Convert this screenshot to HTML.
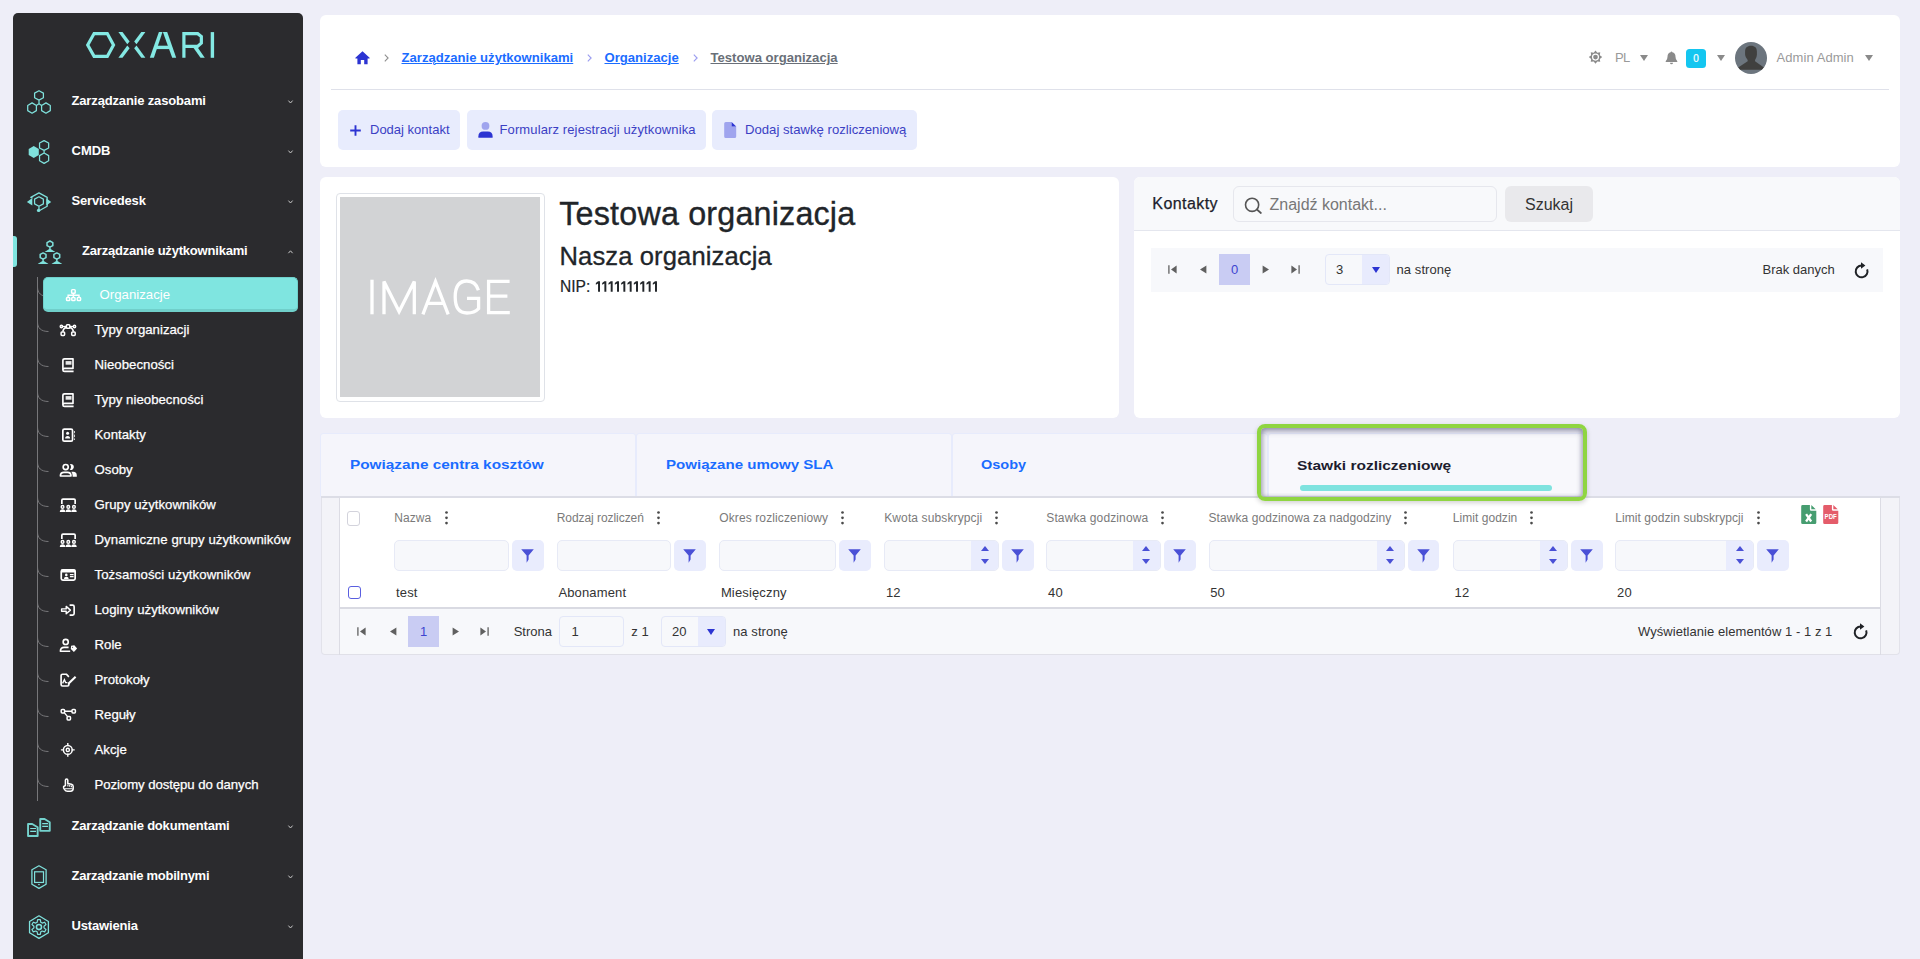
<!DOCTYPE html>
<html lang="pl">
<head>
<meta charset="utf-8">
<title>Testowa organizacja</title>
<style>
*{box-sizing:border-box;margin:0;padding:0}
html,body{width:1920px;height:959px;overflow:hidden}
body{background:#eeeef8;font-family:"Liberation Sans",sans-serif;color:#333;position:relative;-webkit-font-smoothing:antialiased}
.abs{position:absolute}
svg{display:block;overflow:visible}
.t{position:absolute;white-space:nowrap;line-height:1}

/* ---------- sidebar ---------- */
#side{position:absolute;left:13px;top:13px;width:290px;height:960px;background:#2b2b2e;border-radius:5px 5px 0 0}
.m1{position:absolute;left:71.5px;font-weight:bold;font-size:13px;color:#fff;white-space:nowrap;line-height:1;letter-spacing:-0.15px}
.m2{position:absolute;left:94.5px;font-size:13.2px;color:#fff;white-space:nowrap;line-height:1;letter-spacing:0.02px;-webkit-text-stroke:0.25px #fff}
.chev{position:absolute;left:287.5px;width:5px;height:4px}
.ico1{position:absolute}
.ico2{position:absolute}
.br{position:absolute;left:37px;width:12px;height:10px}


/* ---------- header ---------- */
.bc{position:absolute;top:51px;font-weight:bold;font-size:13.1px;line-height:13px;white-space:nowrap;text-decoration:underline;text-underline-offset:1px;text-decoration-thickness:1px}
.bcsep{position:absolute;top:53.5px;width:5px;height:8px}
.btn{position:absolute;top:110px;height:40px;background:#e8ecfd;border-radius:5px}
.btn span{position:absolute;top:13px;font-size:13px;line-height:13px;color:#3b3fc4;white-space:nowrap}
.hdr-t{position:absolute;top:51px;font-size:13px;line-height:13px;color:#9a9a9a;white-space:nowrap}
.tri{position:absolute;width:0;height:0;border-left:4.2px solid transparent;border-right:4.2px solid transparent;border-top:6.6px solid #8a8a8a}


/* ---------- org + contacts ---------- */
.pg-ico{position:absolute}
.sel{position:absolute;height:31px;border:1px solid #e3e7f8;border-radius:4px;background:#f7f8fb;overflow:hidden}
.sel i{position:absolute;right:0;top:0;bottom:0;width:27px;background:#e8ebfd}
.sel i:after{content:"";position:absolute;left:9.7px;top:11.5px;border-left:4.5px solid transparent;border-right:4.5px solid transparent;border-top:6.5px solid #2c34d2}
.sel b{position:absolute;left:10px;top:8px;font-weight:normal;font-size:13px;line-height:13px;color:#333}
.pgt{position:absolute;font-size:13px;line-height:13px;color:#333;white-space:nowrap}
.pgnum{position:absolute;width:31px;height:31px;background:#c9ccf3;color:#3d44d0;font-size:13px;line-height:31px;text-align:center}


/* ---------- tabs + grid ---------- */
.tab{position:absolute;top:433px;width:316px;height:64px;background:#f5f5fb;border:1px solid #e7ebfc;border-radius:3px 3px 0 0}
.tabt{position:absolute;top:457.5px;font-weight:bold;font-size:13px;line-height:13px;white-space:nowrap;transform-origin:0 50%;color:#1a6cff}
.gh{position:absolute;top:512px;font-size:12px;line-height:12px;color:#7a7a7a;white-space:nowrap;letter-spacing:0.08px}
.keb{position:absolute;top:510.8px;width:3px;height:14px}
.fin{position:absolute;top:540px;height:31px;border:1px solid #e7eaf6;border-radius:5px;background:#f7f8fb;overflow:hidden}
.fin i{position:absolute;right:0;top:0;bottom:0;width:27px;background:#e9ecfd}
.fin i:before{content:"";position:absolute;left:9.7px;top:5px;border-left:4.4px solid transparent;border-right:4.4px solid transparent;border-bottom:5.4px solid #4a50d6}
.fin i:after{content:"";position:absolute;left:9.7px;top:18.2px;border-left:4.4px solid transparent;border-right:4.4px solid transparent;border-top:5.4px solid #4a50d6}
.fbt{position:absolute;top:540px;width:31.5px;height:31px;border-radius:5px;background:#e9ecfd}
.fbt svg{position:absolute;left:9.2px;top:8.6px}
.gd{position:absolute;top:586px;font-size:13px;line-height:13px;color:#333;white-space:nowrap;letter-spacing:0.15px}

/* ---------- cards ---------- */
.card{position:absolute;background:#fff;border-radius:6px}
</style>
</head>
<body>

<!-- ================= SIDEBAR ================= -->
<div id="side"></div>


<!-- logo -->
<svg class="abs" style="left:80px;top:25px" width="150" height="40" viewBox="80 25 150 40">
  <g fill="none" stroke="#84e9e4" stroke-width="3.2" stroke-linejoin="miter">
    <path d="M87.7 45 L94.1 33.55 L107.3 33.55 L113.5 45 L107.3 56.4 L94.1 56.4 Z"/>
    <path d="M183.9 57.8 L183.9 33.65 L197.7 33.65 L201.35 36.5 L201.35 43.1 L197.5 46.4 L184 46.4"/>
  </g>
  <g fill="#84e9e4">
    <polygon points="118.4,32.1 122.5,32.1 129.6,41.6 127.3,44.3"/>
    <polygon points="118.4,57.8 122.5,57.8 129.6,48.3 127.3,45.6"/>
    <polygon points="145.4,32.1 141.3,32.1 134.2,41.6 136.5,44.3"/>
    <polygon points="145.4,57.8 141.3,57.8 134.2,48.3 136.5,45.6"/>
    <polygon points="149.8,57.8 153.9,57.8 162.5,32.1 158.9,32.1"/>
    <polygon points="162.9,32.1 167.2,32.1 176.2,57.8 172.2,57.8"/>
    <rect x="155.5" y="45.7" width="15.6" height="3.4"/>
    <polygon points="193.4,47.8 197.9,47.8 204.8,57.8 200.5,57.8"/>
    <rect x="210.7" y="32.1" width="3.4" height="25.7"/>
  </g>
</svg>

<!-- level-1 items -->
<div class="m1" style="top:94px">Zarządzanie zasobami</div>
<div class="m1" style="top:144px;letter-spacing:0">CMDB</div>
<div class="m1" style="top:194px">Servicedesk</div>
<div class="abs" style="left:13px;top:236px;width:4px;height:31px;background:#7fe5e0;border-radius:0 3px 3px 0"></div>
<div class="m1" style="top:244px;left:82px;letter-spacing:-0.2px">Zarządzanie użytkownikami</div>
<div class="m1" style="top:819px;letter-spacing:-0.2px">Zarządzanie dokumentami</div>
<div class="m1" style="top:869px;letter-spacing:-0.25px">Zarządzanie mobilnymi</div>
<div class="m1" style="top:919px">Ustawienia</div>

<!-- chevrons -->
<svg class="chev" style="top:99.5px" viewBox="0 0 5 4"><path d="M0.4 0.6 L2.5 3 L4.6 0.6" fill="none" stroke="#c8c8c8" stroke-width="1"/></svg>
<svg class="chev" style="top:149.5px" viewBox="0 0 5 4"><path d="M0.4 0.6 L2.5 3 L4.6 0.6" fill="none" stroke="#c8c8c8" stroke-width="1"/></svg>
<svg class="chev" style="top:199.5px" viewBox="0 0 5 4"><path d="M0.4 0.6 L2.5 3 L4.6 0.6" fill="none" stroke="#c8c8c8" stroke-width="1"/></svg>
<svg class="chev" style="top:250px" viewBox="0 0 5 4"><path d="M0.4 3.2 L2.5 0.8 L4.6 3.2" fill="none" stroke="#c8c8c8" stroke-width="1"/></svg>
<svg class="chev" style="top:824.5px" viewBox="0 0 5 4"><path d="M0.4 0.6 L2.5 3 L4.6 0.6" fill="none" stroke="#c8c8c8" stroke-width="1"/></svg>
<svg class="chev" style="top:874.5px" viewBox="0 0 5 4"><path d="M0.4 0.6 L2.5 3 L4.6 0.6" fill="none" stroke="#c8c8c8" stroke-width="1"/></svg>
<svg class="chev" style="top:924.5px" viewBox="0 0 5 4"><path d="M0.4 0.6 L2.5 3 L4.6 0.6" fill="none" stroke="#c8c8c8" stroke-width="1"/></svg>

<!-- tree line + branches -->
<div class="abs" style="left:37px;top:277px;width:1px;height:524px;background:#77777a"></div>
<svg class="br" style="top:287px" viewBox="0 0 12 10"><path d="M0.5 0 C0.5 6 4 9.5 11.5 9.5" fill="none" stroke="#77777a" stroke-width="1"/></svg>
<svg class="br" style="top:322px" viewBox="0 0 12 10"><path d="M0.5 0 C0.5 6 4 9.5 11.5 9.5" fill="none" stroke="#77777a" stroke-width="1"/></svg>
<svg class="br" style="top:357px" viewBox="0 0 12 10"><path d="M0.5 0 C0.5 6 4 9.5 11.5 9.5" fill="none" stroke="#77777a" stroke-width="1"/></svg>
<svg class="br" style="top:392px" viewBox="0 0 12 10"><path d="M0.5 0 C0.5 6 4 9.5 11.5 9.5" fill="none" stroke="#77777a" stroke-width="1"/></svg>
<svg class="br" style="top:427px" viewBox="0 0 12 10"><path d="M0.5 0 C0.5 6 4 9.5 11.5 9.5" fill="none" stroke="#77777a" stroke-width="1"/></svg>
<svg class="br" style="top:462px" viewBox="0 0 12 10"><path d="M0.5 0 C0.5 6 4 9.5 11.5 9.5" fill="none" stroke="#77777a" stroke-width="1"/></svg>
<svg class="br" style="top:497px" viewBox="0 0 12 10"><path d="M0.5 0 C0.5 6 4 9.5 11.5 9.5" fill="none" stroke="#77777a" stroke-width="1"/></svg>
<svg class="br" style="top:532px" viewBox="0 0 12 10"><path d="M0.5 0 C0.5 6 4 9.5 11.5 9.5" fill="none" stroke="#77777a" stroke-width="1"/></svg>
<svg class="br" style="top:567px" viewBox="0 0 12 10"><path d="M0.5 0 C0.5 6 4 9.5 11.5 9.5" fill="none" stroke="#77777a" stroke-width="1"/></svg>
<svg class="br" style="top:602px" viewBox="0 0 12 10"><path d="M0.5 0 C0.5 6 4 9.5 11.5 9.5" fill="none" stroke="#77777a" stroke-width="1"/></svg>
<svg class="br" style="top:637px" viewBox="0 0 12 10"><path d="M0.5 0 C0.5 6 4 9.5 11.5 9.5" fill="none" stroke="#77777a" stroke-width="1"/></svg>
<svg class="br" style="top:672px" viewBox="0 0 12 10"><path d="M0.5 0 C0.5 6 4 9.5 11.5 9.5" fill="none" stroke="#77777a" stroke-width="1"/></svg>
<svg class="br" style="top:707px" viewBox="0 0 12 10"><path d="M0.5 0 C0.5 6 4 9.5 11.5 9.5" fill="none" stroke="#77777a" stroke-width="1"/></svg>
<svg class="br" style="top:742px" viewBox="0 0 12 10"><path d="M0.5 0 C0.5 6 4 9.5 11.5 9.5" fill="none" stroke="#77777a" stroke-width="1"/></svg>
<svg class="br" style="top:777px" viewBox="0 0 12 10"><path d="M0.5 0 C0.5 6 4 9.5 11.5 9.5" fill="none" stroke="#77777a" stroke-width="1"/></svg>


<!-- active item -->
<div class="abs" style="left:43px;top:277px;width:255px;height:35px;background:#7fe5e0;border:1px solid #70d1cc;border-bottom:3px solid #70cfca;border-radius:5px"></div>
<div class="m2" style="top:288px;left:99.5px;-webkit-text-stroke:0">Organizacje</div>

<!-- level-2 items -->
<div class="m2" style="top:323px">Typy organizacji</div>
<div class="m2" style="top:358px">Nieobecności</div>
<div class="m2" style="top:393px">Typy nieobecności</div>
<div class="m2" style="top:428px">Kontakty</div>
<div class="m2" style="top:463px">Osoby</div>
<div class="m2" style="top:498px">Grupy użytkowników</div>
<div class="m2" style="top:533px;letter-spacing:0.06px">Dynamiczne grupy użytkowników</div>
<div class="m2" style="top:568px;letter-spacing:0.09px">Tożsamości użytkowników</div>
<div class="m2" style="top:603px">Loginy użytkowników</div>
<div class="m2" style="top:638px">Role</div>
<div class="m2" style="top:673px">Protokoły</div>
<div class="m2" style="top:708px">Reguły</div>
<div class="m2" style="top:743px">Akcje</div>
<div class="m2" style="top:778px;letter-spacing:-0.07px">Poziomy dostępu do danych</div>
<svg class="abs" style="left:0;top:0" width="320" height="959" viewBox="0 0 320 959">
<path d="M39.00 90.75 L43.40 93.10 L43.40 97.80 L39.00 100.15 L34.60 97.80 L34.60 93.10 Z M32.05 102.90 L36.40 105.47 L36.40 110.62 L32.05 113.20 L27.70 110.62 L27.70 105.47 Z M45.95 102.90 L50.30 105.47 L50.30 110.62 L45.95 113.20 L41.60 110.62 L41.60 105.47 Z M39 100.15 L39 103.7 L36.4 105.45 M39 103.7 L41.6 105.45" fill="none" stroke="#7fe1dc" stroke-width="1.25" stroke-linejoin="round"/>
<path d="M33.75 146.05 L38.80 149.03 L38.80 154.97 L33.75 157.95 L28.70 154.97 L28.70 149.03 Z" fill="#7fe1dc"/>
<path d="M44.10 140.60 L48.65 143.05 L48.65 147.95 L44.10 150.40 L39.55 147.95 L39.55 143.05 Z M44.10 153.00 L48.65 155.60 L48.65 160.80 L44.10 163.40 L39.55 160.80 L39.55 155.60 Z M44.1 150.4 L44.1 153" fill="none" stroke="#7fe1dc" stroke-width="1.25" stroke-linejoin="round"/>
<path d="M32.6 198 L30.8 197.4 L38.97 192.9 L47.2 197.4 L47.2 206.2 L39.6 210.5" fill="none" stroke="#7fe1dc" stroke-width="1.25" stroke-linejoin="round"/>
<path d="M38.97 196.80 L43.37 199.15 L43.37 203.85 L38.97 206.20 L34.57 203.85 L34.57 199.15 Z M38.97 206.2 L38.97 209.5" fill="none" stroke="#7fe1dc" stroke-width="1.25" stroke-linejoin="round"/>
<path d="M26.9 201.9 L32.3 197.9 L32.3 205.5 Z M51.2 201.9 L46.3 198.2 L46.3 205.4 Z" fill="#7fe1dc"/>
<circle cx="38.6" cy="210.4" r="1.7" fill="#7fe1dc"/>
<path d="M49.93 241.00 L52.83 242.55 L52.83 245.65 L49.93 247.20 L47.03 245.65 L47.03 242.55 Z" fill="none" stroke="#7fe1dc" stroke-width="1.5" stroke-linejoin="round"/><path d="M49.93 247.2 L49.93 249.1" stroke="#7fe1dc" stroke-width="1.4"/><path d="M44.7 252.1 Q45.0 251.2 46.1 250.9 L49.63 248.79999999999998 L50.23 248.79999999999998 L53.800000000000004 250.9 Q54.900000000000006 251.2 55.2 252.1 Z" fill="#7fe1dc"/>
<path d="M43.10 252.90 L46.00 254.45 L46.00 257.55 L43.10 259.10 L40.20 257.55 L40.20 254.45 Z" fill="none" stroke="#7fe1dc" stroke-width="1.5" stroke-linejoin="round"/><path d="M43.1 259.1 L43.1 261.0" stroke="#7fe1dc" stroke-width="1.4"/><path d="M37.8 264.1 Q38.099999999999994 263.20000000000005 39.199999999999996 262.90000000000003 L42.800000000000004 260.8 L43.4 260.8 L47.0 262.90000000000003 Q48.1 263.20000000000005 48.4 264.1 Z" fill="#7fe1dc"/>
<path d="M56.80 252.90 L59.70 254.45 L59.70 257.55 L56.80 259.10 L53.90 257.55 L53.90 254.45 Z" fill="none" stroke="#7fe1dc" stroke-width="1.5" stroke-linejoin="round"/><path d="M56.8 259.1 L56.8 261.0" stroke="#7fe1dc" stroke-width="1.4"/><path d="M51.6 264.1 Q51.9 263.20000000000005 53.0 262.90000000000003 L56.5 260.8 L57.099999999999994 260.8 L60.7 262.90000000000003 Q61.800000000000004 263.20000000000005 62.1 264.1 Z" fill="#7fe1dc"/>
<path d="M28.05 824.05 L32.2 824.05 L37.65 827.3 L37.65 836 L28.05 836 Z M40.25 819.05 L44.6 819.05 L49.75 822.2 L49.75 830.85 L40.25 830.85 Z" fill="none" stroke="#74d2cd" stroke-width="1.9" stroke-linejoin="round"/>
<path d="M30.2 828.5 L36 828.5 M30.2 831.3 L36 831.3 M42.2 823.65 L48 823.65 M42.2 826.4 L48 826.4" stroke="#7fe1dc" stroke-width="1.15"/>
<path d="M38.97 865.8 L46.1 869.75 L46.1 884.3 L38.97 888.4 L31.9 884.3 L31.9 869.75 Z" fill="none" stroke="#7fe1dc" stroke-width="1.3" stroke-linejoin="round"/>
<rect x="34.6" y="871.8" width="8.9" height="10.65" fill="none" stroke="#7fe1dc" stroke-width="1.2"/>
<ellipse cx="38.97" cy="884.6" rx="1.05" ry="0.6" fill="#7fe1dc"/>
<path d="M38.97 915.8 L48.4 921.5 L48.4 932.7 L38.97 938.4 L29.55 932.7 L29.55 921.5 Z" fill="none" stroke="#7fe1dc" stroke-width="1.3" stroke-linejoin="round"/>
<path d="M37.14 922.29 L37.61 919.72 L40.33 919.72 L40.80 922.29 L42.18 923.09 L44.64 922.21 L45.99 924.56 L44.01 926.25 L44.01 927.85 L45.99 929.54 L44.64 931.89 L42.18 931.01 L40.80 931.81 L40.33 934.38 L37.61 934.38 L37.14 931.81 L35.76 931.01 L33.30 931.89 L31.95 929.54 L33.93 927.85 L33.93 926.25 L31.95 924.56 L33.30 922.21 L35.76 923.09 Z" fill="none" stroke="#7fe1dc" stroke-width="1.2" stroke-linejoin="round"/>
<circle cx="38.97" cy="927.05" r="2.55" fill="none" stroke="#7fe1dc" stroke-width="1.55"/>
</svg>
<svg class="abs" style="left:0;top:0" width="320" height="959" viewBox="0 0 320 959">
<path d="M73.4 293.4 L73.4 297 M68.1 297.2 L68.1 295.2 L79 295.2 L79 297.2" fill="none" stroke="#fff" stroke-width="1.35"/>
<rect x="71.6" y="289.6" width="3.6" height="3.6" rx="0.8" fill="none" stroke="#fff" stroke-width="1.45"/>
<rect x="66.5" y="297.4" width="3.3" height="3.1" rx="0.8" fill="none" stroke="#fff" stroke-width="1.45"/>
<rect x="71.75" y="297.4" width="3.3" height="3.1" rx="0.8" fill="none" stroke="#fff" stroke-width="1.45"/>
<rect x="77.3" y="297.4" width="3.3" height="3.1" rx="0.8" fill="none" stroke="#fff" stroke-width="1.45"/>
<path d="M61.5 326.5 L74.4 326.5" stroke="#fff" stroke-width="1.30"/>
<circle cx="61.4" cy="326.5" r="1.25" fill="none" stroke="#fff" stroke-width="1.30"/><circle cx="74.5" cy="326.5" r="1.25" fill="none" stroke="#fff" stroke-width="1.30"/>
<rect x="66.4" y="324.8" width="3.4" height="3.4" rx="0.8" fill="#2b2b2e" stroke="#fff" stroke-width="1.50"/>
<path d="M66.4 327.2 Q63 328.5 62.8 331.6 M69.8 327.2 Q73.2 328.5 73.4 331.6" fill="none" stroke="#fff" stroke-width="1.45"/>
<rect x="61.1" y="331.9" width="3.5" height="3.5" rx="0.8" fill="none" stroke="#fff" stroke-width="1.50"/><rect x="71.7" y="331.9" width="3.5" height="3.5" rx="0.8" fill="none" stroke="#fff" stroke-width="1.50"/>
<path d="M62.9 370.0 L62.9 360.5 Q62.9 358.85 64.6 358.85 L73 358.85 L73 368.40000000000003 L64.6 368.40000000000003 Q62.9 368.40000000000003 62.9 370.0 Q62.9 371.40000000000003 64.6 371.40000000000003 L73.6 371.40000000000003" fill="none" stroke="#fff" stroke-width="1.65" stroke-linejoin="round"/>
<rect x="65.6" y="361.1" width="5.9" height="3.6" fill="#e8e8e8"/>
<path d="M62.9 405.0 L62.9 395.5 Q62.9 393.85 64.6 393.85 L73 393.85 L73 403.40000000000003 L64.6 403.40000000000003 Q62.9 403.40000000000003 62.9 405.0 Q62.9 406.40000000000003 64.6 406.40000000000003 L73.6 406.40000000000003" fill="none" stroke="#fff" stroke-width="1.65" stroke-linejoin="round"/>
<rect x="65.6" y="396.1" width="5.9" height="3.6" fill="#e8e8e8"/>
<rect x="62.85" y="429.05" width="9.7" height="12.1" rx="1.5" fill="none" stroke="#fff" stroke-width="1.70"/>
<circle cx="67.6" cy="433.3" r="1.5" fill="#fff"/><path d="M65.1 438.6 Q65.1 436 67.6 436 Q70.1 436 70.1 438.6 Z" fill="#fff"/>
<path d="M74.5 431 L74.5 433.2 M74.5 434.6 L74.5 437.2 M74.5 438.4 L74.5 440" stroke="#cfcfcf" stroke-width="1"/>
<circle cx="65.7" cy="467" r="2.55" fill="none" stroke="#fff" stroke-width="1.65"/>
<path d="M60.4 476 Q60.4 472.4 64 472.4 L67.4 472.4 Q71 472.4 71 476 Z" fill="none" stroke="#fff" stroke-width="1.65" stroke-linejoin="round"/>
<path d="M69.9 464.3 A2.9 2.9 0 1 1 69.9 469.7 A4.2 4.2 0 0 0 69.9 464.3 Z" fill="#fff"/>
<path d="M71.3 471.8 L73.2 471.8 Q76.8 471.8 76.8 475.4 L76.8 476.7 L72.6 476.7 L72.6 475.6 Q72.6 473.3 71.3 471.8 Z" fill="#fff"/>
<path d="M61.85 503.90000000000003 L61.85 500.2 Q61.85 499.05 63 499.05 L74 499.05 Q75.15 499.05 75.15 500.2 L75.15 503.90000000000003" fill="none" stroke="#fff" stroke-width="1.70"/>
<circle cx="62.55" cy="506.90000000000003" r="1.35" fill="none" stroke="#fff" stroke-width="1.40"/>
<path d="M59.8 511.90000000000003 Q59.8 509.2 62.55 509.2 Q65.3 509.2 65.3 511.90000000000003 Z" fill="#fff"/>
<circle cx="68.3" cy="506.90000000000003" r="1.35" fill="none" stroke="#fff" stroke-width="1.40"/>
<path d="M65.55 511.90000000000003 Q65.55 509.2 68.3 509.2 Q71.05 509.2 71.05 511.90000000000003 Z" fill="#fff"/>
<circle cx="73.95" cy="506.90000000000003" r="1.35" fill="none" stroke="#fff" stroke-width="1.40"/>
<path d="M71.2 511.90000000000003 Q71.2 509.2 73.95 509.2 Q76.7 509.2 76.7 511.90000000000003 Z" fill="#fff"/>
<path d="M61.85 538.9 L61.85 535.1999999999999 Q61.85 534.05 63 534.05 L74 534.05 Q75.15 534.05 75.15 535.1999999999999 L75.15 538.9" fill="none" stroke="#fff" stroke-width="1.70"/>
<circle cx="62.55" cy="541.9" r="1.35" fill="none" stroke="#fff" stroke-width="1.40"/>
<path d="M59.8 546.9 Q59.8 544.1999999999999 62.55 544.1999999999999 Q65.3 544.1999999999999 65.3 546.9 Z" fill="#fff"/>
<circle cx="68.3" cy="541.9" r="1.35" fill="none" stroke="#fff" stroke-width="1.40"/>
<path d="M65.55 546.9 Q65.55 544.1999999999999 68.3 544.1999999999999 Q71.05 544.1999999999999 71.05 546.9 Z" fill="#fff"/>
<circle cx="73.95" cy="541.9" r="1.35" fill="none" stroke="#fff" stroke-width="1.40"/>
<path d="M71.2 546.9 Q71.2 544.1999999999999 73.95 544.1999999999999 Q76.7 544.1999999999999 76.7 546.9 Z" fill="#fff"/>
<rect x="61.25" y="569.95" width="13.9" height="10.2" rx="1.6" fill="none" stroke="#fff" stroke-width="1.70"/>
<rect x="61" y="569.4" width="14.4" height="3" rx="1" fill="#fff"/>
<circle cx="66.3" cy="574.9" r="1.3" fill="#fff"/><path d="M63.9 578.9 Q63.9 576.7 66.3 576.7 Q68.7 576.7 68.7 578.9 Z" fill="#fff"/>
<path d="M69.9 574.7 L73.6 574.7 M69.9 576.7 L73.6 576.7" stroke="#fff" stroke-width="1.30"/>
<path d="M69.6 605.15 L72.6 605.15 Q74.15 605.15 74.15 606.7 L74.15 613.5 Q74.15 615.05 72.6 615.05 L69.6 615.05" fill="none" stroke="#fff" stroke-width="1.65"/>
<path d="M61.6 608.9 L66.2 608.9 L66.2 606.4 L70.4 610.1 L66.2 613.8 L66.2 611.3 L61.6 611.3 Z" fill="none" stroke="#fff" stroke-width="1.40" stroke-linejoin="round"/>
<circle cx="65.7" cy="641.9" r="2.55" fill="none" stroke="#fff" stroke-width="1.65"/>
<path d="M70.2 651.2 L60.4 651.2 Q60.4 647.3 64.2 647.3 L68.6 647.3" fill="none" stroke="#fff" stroke-width="1.65" stroke-linejoin="round"/>
<path d="M71.1 645.7 L74.3 645.3 L77.1 648.5 L73.9 652 L70.8 649 Z" fill="#fff"/><circle cx="72.6" cy="647.2" r="0.55" fill="#2b2b2e"/>
<path d="M68.9 683 L68.9 684.6 Q68.9 686 67.5 686 L62.5 686 Q61.1 686 61.1 684.6 L61.1 675.6 Q61.1 674.2 62.5 674.2 L66.3 674.2 L68.9 676.8" fill="none" stroke="#fff" stroke-width="1.65" stroke-linejoin="round"/>
<path d="M74.9 676 L76.3 677.4 L69.6 684 L67.6 684.5 L68.1 682.6 Z" fill="#fff"/>
<path d="M62.6 683.4 L64.4 679.6 L65.6 682.6 L67.4 682.6" fill="none" stroke="#fff" stroke-width="1.30"/>
<path d="M64.6 711.2 L72 711.2 M64.2 712.6 L67.6 716.6" stroke="#fff" stroke-width="1.40"/>
<rect x="61.2" y="709.5" width="3.4" height="3.4" rx="0.9" fill="none" stroke="#fff" stroke-width="1.50"/>
<rect x="72" y="709.5" width="3.4" height="3.4" rx="0.9" fill="none" stroke="#fff" stroke-width="1.50"/>
<rect x="67.1" y="716.5" width="3.4" height="3.4" rx="0.9" fill="none" stroke="#fff" stroke-width="1.50"/>
<circle cx="67.8" cy="749.9" r="4.4" fill="none" stroke="#fff" stroke-width="1.50"/><circle cx="67.8" cy="749.9" r="1.6" fill="none" stroke="#fff" stroke-width="1.40"/>
<path d="M67.8 743 L67.8 746 M67.8 753.8 L67.8 756.8 M60.9 749.9 L63.9 749.9 M71.7 749.9 L74.7 749.9" stroke="#fff" stroke-width="1.40"/>
<path d="M65.4 785.6 L65.4 780.2 Q65.4 778.9 66.6 778.9 Q67.8 778.9 67.8 780.2 L67.8 783.4 L71.4 784.2 Q73.2 784.7 73.2 786.5 L73.2 788.6 Q73.2 791.2 70.4 791.2 L67.4 791.2 Q65.6 791.2 64.6 789.6 L63.6 787.8 Q63.2 786.6 64.4 786 Z" fill="none" stroke="#fff" stroke-width="1.50" stroke-linejoin="round"/>
<path d="M67.9 786.4 L67.9 784.6 M69.7 786.8 L69.7 785 M71.4 787.2 L71.4 785.4 M65 788.8 L72.6 788.8" stroke="#fff" stroke-width="1.10"/>
</svg>



<!-- ================= HEADER CARD ================= -->
<div class="card" style="left:320px;top:15px;width:1580px;height:152px"></div>

<!-- breadcrumb -->
<svg class="abs" style="left:354.5px;top:50.5px" width="15" height="14" viewBox="0 0 15 14"><path d="M7.5 0.3 L14.6 6.8 L14.6 7.4 L12.6 7.4 L12.6 13.3 L9.2 13.3 L9.2 8.9 L5.8 8.9 L5.8 13.3 L2.4 13.3 L2.4 7.4 L0.4 7.4 L0.4 6.8 Z" fill="#2c34d2"/></svg>
<svg class="bcsep" style="left:383.5px" viewBox="0 0 5 8"><path d="M0.8 0.6 L4.1 4 L0.8 7.4" fill="none" stroke="#8f8f8f" stroke-width="1.1"/></svg>
<div class="bc" style="left:401.5px;color:#1b6cff">Zarządzanie użytkownikami</div>
<svg class="bcsep" style="left:587px" viewBox="0 0 5 8"><path d="M0.8 0.6 L4.1 4 L0.8 7.4" fill="none" stroke="#9b9df0" stroke-width="1.15"/></svg>
<div class="bc" style="left:604.5px;color:#1b6cff">Organizacje</div>
<svg class="bcsep" style="left:692.5px" viewBox="0 0 5 8"><path d="M0.8 0.6 L4.1 4 L0.8 7.4" fill="none" stroke="#9b9df0" stroke-width="1.15"/></svg>
<div class="bc" style="left:710.5px;color:#696f78">Testowa organizacja</div>

<!-- right side -->
<svg class="abs" style="left:1588px;top:50px" width="15" height="15" viewBox="0 0 15 15">
 <polygon points="7.50,0.40 9.30,2.76 12.24,2.36 11.84,5.30 14.20,7.10 11.84,8.90 12.24,11.84 9.30,11.44 7.50,13.80 5.70,11.44 2.76,11.84 3.16,8.90 0.80,7.10 3.16,5.30 2.76,2.36 5.70,2.76" fill="#8a8a8a"/>
 <circle cx="7.5" cy="7.1" r="3.55" fill="#fff"/><circle cx="7.5" cy="7.1" r="2.35" fill="#8a8a8a"/>
</svg>
<div class="hdr-t" style="left:1615px;letter-spacing:-0.6px">PL</div>
<div class="tri" style="left:1640px;top:54.7px"></div>
<svg class="abs" style="left:1664.6px;top:50.5px" width="13" height="14" viewBox="0 0 13 14"><path d="M6.5 0.4 Q7.3 0.4 7.3 1.3 Q10.5 2 10.5 5.8 Q10.5 8.8 12.3 10.2 L12.3 11 L0.7 11 L0.7 10.2 Q2.5 8.8 2.5 5.8 Q2.5 2 5.7 1.3 Q5.7 0.4 6.5 0.4 Z M5 11.8 L8 11.8 Q8 13.3 6.5 13.3 Q5 13.3 5 11.8 Z" fill="#8a8a8a"/></svg>
<div class="abs" style="left:1686px;top:49px;width:20px;height:19px;background:#14c6f0;border-radius:3.5px;color:#fff;font-size:10px;line-height:20px;text-align:center;-webkit-text-stroke:0.2px #fff">0</div>
<div class="tri" style="left:1717px;top:54.7px"></div>
<svg class="abs" style="left:1735px;top:42px" width="32" height="32" viewBox="0 0 32 32">
 <defs><clipPath id="av"><circle cx="16" cy="16" r="16"/></clipPath></defs>
 <circle cx="16" cy="16" r="16" fill="#6c757e"/>
 <g clip-path="url(#av)" fill="#40403f">
  <path d="M16 3.8 C19.9 3.8 21.9 6 21.9 9.4 L21.9 12.6 C21.9 14.8 20.9 16.6 20.05 17.9 L20.05 19.3 L28.9 25.6 L27.4 27.75 L4.6 27.75 L3.2 25.6 L12.65 19.3 L12.65 17.9 C11.8 16.6 10.1 14.8 10.1 12.6 L10.1 9.4 C10.1 6 12.1 3.8 16 3.8 Z"/>
 </g>
</svg>
<div class="hdr-t" style="left:1776.5px;letter-spacing:0.07px">Admin Admin</div>
<div class="tri" style="left:1864.7px;top:54.7px"></div>

<!-- divider -->
<div class="abs" style="left:331px;top:89px;width:1558px;height:1px;background:#dfe1ea"></div>

<!-- toolbar buttons -->
<div class="btn" style="left:338px;width:122px">
 <svg class="abs" style="left:12px;top:14.5px" width="11" height="11" viewBox="0 0 11 11"><path d="M5.5 0.2 V10.8 M0.2 5.5 H10.8" stroke="#2c34d2" stroke-width="1.9"/></svg>
 <span style="left:32px">Dodaj kontakt</span>
</div>
<div class="btn" style="left:467px;width:239px">
 <svg class="abs" style="left:10.5px;top:12px" width="15" height="16" viewBox="0 0 15 16"><circle cx="7.5" cy="3.9" r="3.9" fill="#9fa4ee"/><path d="M0.4 15.8 L0.4 14.2 Q0.4 9.4 5.2 9.4 L9.8 9.4 Q14.6 9.4 14.6 14.2 L14.6 15.8 Z" fill="#2c34d2"/></svg>
 <span style="left:32.5px;letter-spacing:0.12px">Formularz rejestracji użytkownika</span>
</div>
<div class="btn" style="left:712px;width:205px">
 <svg class="abs" style="left:12.3px;top:12px" width="13" height="16" viewBox="0 0 13 16"><path d="M1.8 0 L7.6 0 L7.6 4.6 L12.2 4.6 L12.2 14.4 Q12.2 16 10.6 16 L1.8 16 Q0.2 16 0.2 14.4 L0.2 1.6 Q0.2 0 1.8 0 Z" fill="#9fa4ee"/><path d="M7.6 0 L12.2 4.6 L7.6 4.6 Z" fill="#2c34d2"/></svg>
 <span style="left:33px;font-size:13.15px">Dodaj stawkę rozliczeniową</span>
</div>


<!-- ================= ORG CARD ================= -->
<div class="card" style="left:320px;top:177px;width:799px;height:241px"></div>

<div class="abs" style="left:336px;top:193px;width:209px;height:209px;border:1px solid #dfe2e8;border-radius:4px;background:#fff"></div>
<div class="abs" style="left:340px;top:197px;width:200px;height:200px;background:#d2d3d5"></div>
<!-- IMAGE thin text -->
<svg class="abs" style="left:360px;top:270px" width="160" height="56" viewBox="360 270 160 56" fill="none" stroke="#fff" stroke-width="3.3" stroke-linejoin="miter">
 <path d="M372 279.7 V314.3"/>
 <path d="M384 314.3 V281.5 L399.1 311.6 L414.3 281.5 V314.3"/>
 <path d="M422.9 314.3 L435.5 281.6 L448.2 314.3 M427.2 303.4 H443.8"/>
 <path d="M478.4 290.2 Q475.6 281 466.8 281 Q455.2 281 455.2 297 Q455.2 313 467 313 Q474.4 313 478.6 308.6 V298.4 H467"/>
 <path d="M509.6 281.4 H488.6 V312.7 H509.8 M488.6 296.2 H507.4"/>
</svg>
<div class="t" style="left:559.3px;top:198.4px;font-size:32.3px;line-height:32px;color:#212529;letter-spacing:0.18px;-webkit-text-stroke:0.35px #212529">Testowa organizacja</div>
<div class="t" style="left:559.5px;top:243.3px;font-size:25.6px;line-height:26px;color:#212529;letter-spacing:0.1px;-webkit-text-stroke:0.3px #212529">Nasza organizacja</div>
<div class="t" style="left:560px;top:279px;font-size:15.6px;line-height:15px;color:#212529;-webkit-text-stroke:0.2px #212529">NIP:</div>
<svg class="abs" style="left:590px;top:278px" width="80" height="16" viewBox="590 278 80 16"><path d="M598.05 281.35 h1.95 v10.35 h-1.95 v-8.1 l-2.2 1.15 v-1.75 z M604.38 281.35 h1.95 v10.35 h-1.95 v-8.1 l-2.2 1.15 v-1.75 z M610.71 281.35 h1.95 v10.35 h-1.95 v-8.1 l-2.2 1.15 v-1.75 z M617.04 281.35 h1.95 v10.35 h-1.95 v-8.1 l-2.2 1.15 v-1.75 z M623.37 281.35 h1.95 v10.35 h-1.95 v-8.1 l-2.2 1.15 v-1.75 z M629.70 281.35 h1.95 v10.35 h-1.95 v-8.1 l-2.2 1.15 v-1.75 z M636.03 281.35 h1.95 v10.35 h-1.95 v-8.1 l-2.2 1.15 v-1.75 z M642.36 281.35 h1.95 v10.35 h-1.95 v-8.1 l-2.2 1.15 v-1.75 z M648.69 281.35 h1.95 v10.35 h-1.95 v-8.1 l-2.2 1.15 v-1.75 z M655.02 281.35 h1.95 v10.35 h-1.95 v-8.1 l-2.2 1.15 v-1.75 z " fill="#212529"/></svg>


<!-- ================= CONTACTS CARD ================= -->
<div class="card" style="left:1134px;top:177px;width:766px;height:241px"></div>

<div class="abs" style="left:1134px;top:177px;width:766px;height:54px;background:#f8f9fb;border-bottom:1px solid #e4e6ee;border-radius:6px 6px 0 0"></div>
<div class="t" style="left:1152.3px;top:196px;font-size:16px;line-height:16px;color:#1d1d2b;letter-spacing:0.42px;-webkit-text-stroke:0.25px #1d1d2b">Kontakty</div>
<div class="abs" style="left:1233px;top:186px;width:264px;height:36px;border:1px solid #e6e7ed;border-radius:6px;background:#f8f9fb"></div>
<svg class="abs" style="left:1244px;top:196.5px" width="18" height="18" viewBox="0 0 18 18"><circle cx="8.1" cy="7.8" r="6.6" fill="none" stroke="#555" stroke-width="1.6"/><path d="M12.9 12.5 L16.9 16" stroke="#555" stroke-width="1.7" stroke-linecap="round"/></svg>
<div class="t" style="left:1269.5px;top:197px;font-size:16px;line-height:16px;color:#777">Znajdź kontakt...</div>
<div class="abs" style="left:1505px;top:186px;width:88px;height:36px;background:#e9e9ec;border-radius:6px"></div>
<div class="t" style="left:1525px;top:197px;font-size:16px;line-height:16px;color:#333">Szukaj</div>

<div class="abs" style="left:1151px;top:248px;width:1732px;max-width:732px;height:44px;background:#f7f8fb"></div>
<svg class="abs" style="left:1167.5px;top:264.5px" width="9" height="9" viewBox="0 0 9 9"><path d="M0.9 0.3 V8.7" stroke="#606060" stroke-width="1.3"/><path d="M8.6 0.4 L3 4.5 L8.6 8.6 Z" fill="#606060"/></svg>
<svg class="abs" style="left:1199px;top:264.5px" width="8" height="9" viewBox="0 0 8 9"><path d="M7.4 0.4 L1 4.5 L7.4 8.6 Z" fill="#606060"/></svg>
<div class="pgnum" style="left:1219px;top:254px">0</div>
<svg class="abs" style="left:1262px;top:264.5px" width="8" height="9" viewBox="0 0 8 9"><path d="M0.6 0.4 L7 4.5 L0.6 8.6 Z" fill="#606060"/></svg>
<svg class="abs" style="left:1290.5px;top:264.5px" width="9" height="9" viewBox="0 0 9 9"><path d="M8.1 0.3 V8.7" stroke="#606060" stroke-width="1.3"/><path d="M0.4 0.4 L6 4.5 L0.4 8.6 Z" fill="#606060"/></svg>
<div class="sel" style="left:1325px;top:254px;width:65px"><b>3</b><i></i></div>
<div class="pgt" style="left:1396.5px;top:263px;letter-spacing:0.08px">na stronę</div>
<div class="pgt" style="left:1762.5px;top:263px">Brak danych</div>
<svg class="abs" style="left:1852.9px;top:262px" width="17" height="17" viewBox="0 0 17 17"><path d="M8.6 3.5 A5.9 5.9 0 1 0 14.15 7.4" fill="none" stroke="#1f2226" stroke-width="2"/><path d="M8 0.2 L12.4 3.5 L8 6.8 Z" fill="#1f2226"/></svg>


<!-- ================= TABS ================= -->

<div class="tab" style="left:320px"></div>
<div class="tab" style="left:636px"></div>
<div class="tab" style="left:952px"></div>
<div class="tab" style="left:1268px;background:#f8f8fc"></div>
<div class="tabt" style="left:349.5px;transform:scaleX(1.181)">Powiązane centra kosztów</div>
<div class="tabt" style="left:665.5px;transform:scaleX(1.159)">Powiązane umowy SLA</div>
<div class="tabt" style="left:981.3px;transform:scaleX(1.115)">Osoby</div>
<!-- highlighted tab -->
<div class="abs" style="z-index:5;left:1257px;top:424px;width:330px;height:77px;border:4px solid #8fd541;border-radius:8px;background:transparent;box-shadow:inset 0 3px 6px rgba(60,60,90,.42),inset 2px 0 4px rgba(60,60,90,.18),inset -2px 0 4px rgba(60,60,90,.18),0 2px 5px rgba(0,0,0,.18)"></div>
<div class="tabt" style="z-index:6;left:1297px;top:458.5px;color:#1d1d2e;transform:scaleX(1.192)">Stawki rozliczeniowę</div>
<div class="abs" style="z-index:6;left:1300px;top:485px;width:252px;height:6px;border-radius:3px;background:#7fe3df"></div>


<!-- ================= GRID ================= -->

<!-- grid frame -->
<div class="abs" style="left:321px;top:496px;width:1579px;height:159px;background:#f3f3f8;border:1px solid #e2e2ea;border-top:0;border-radius:0 0 4px 4px"></div>
<div class="abs" style="left:339px;top:496px;width:1542px;height:159px;background:#fff;border-left:1px solid #dcdce4;border-right:1px solid #dcdce4"></div>
<div class="abs" style="left:321px;top:496px;width:1579px;height:2px;background:#dcdde6"></div>
<div class="abs" style="left:340px;top:607px;width:1540px;height:2px;background:#d9dae2"></div>
<div class="abs" style="left:340px;top:609px;width:1540px;height:45px;background:#f7f8fb"></div>
<div class="abs" style="left:340px;top:654px;width:1540px;height:1px;background:#e0e0e8"></div>
<!-- checkboxes -->
<div class="abs" style="left:347px;top:510.5px;width:13px;height:15px;border:1px solid #d3d3dc;border-radius:3px;background:#fff"></div>
<div class="abs" style="left:348px;top:586px;width:13px;height:13px;border:1.3px solid #5a5fe0;border-radius:3px;background:#fff"></div>
<div class="gh" style="left:394.3px;letter-spacing:0.06px">Nazwa</div>
<svg class="keb" style="left:444.8px" viewBox="0 0 3 14"><circle cx="1.5" cy="1.5" r="1.35" fill="#4a4a4a"/><circle cx="1.5" cy="6.8" r="1.35" fill="#4a4a4a"/><circle cx="1.5" cy="12.1" r="1.35" fill="#4a4a4a"/></svg>
<div class="fin" style="left:394.3px;width:114.5px"></div>
<div class="fbt" style="left:512.0px"><svg width="13" height="14" viewBox="0 0 13 14"><path d="M0.2 0.3 H12.8 L7.6 6.6 V10.6 L5.6 13.8 V6.6 Z" fill="#4a50d6"/></svg></div>
<div class="gd" style="left:396.0px">test</div>
<div class="gh" style="left:556.7px;letter-spacing:-0.056px">Rodzaj rozliczeń</div>
<svg class="keb" style="left:656.9px" viewBox="0 0 3 14"><circle cx="1.5" cy="1.5" r="1.35" fill="#4a4a4a"/><circle cx="1.5" cy="6.8" r="1.35" fill="#4a4a4a"/><circle cx="1.5" cy="12.1" r="1.35" fill="#4a4a4a"/></svg>
<div class="fin" style="left:556.7px;width:114.3px"></div>
<div class="fbt" style="left:674.2px"><svg width="13" height="14" viewBox="0 0 13 14"><path d="M0.2 0.3 H12.8 L7.6 6.6 V10.6 L5.6 13.8 V6.6 Z" fill="#4a50d6"/></svg></div>
<div class="gd" style="left:558.4px">Abonament</div>
<div class="gh" style="left:719.2px;letter-spacing:0.12px">Okres rozliczeniowy</div>
<svg class="keb" style="left:840.8px" viewBox="0 0 3 14"><circle cx="1.5" cy="1.5" r="1.35" fill="#4a4a4a"/><circle cx="1.5" cy="6.8" r="1.35" fill="#4a4a4a"/><circle cx="1.5" cy="12.1" r="1.35" fill="#4a4a4a"/></svg>
<div class="fin" style="left:719.2px;width:116.8px"></div>
<div class="fbt" style="left:839.2px"><svg width="13" height="14" viewBox="0 0 13 14"><path d="M0.2 0.3 H12.8 L7.6 6.6 V10.6 L5.6 13.8 V6.6 Z" fill="#4a50d6"/></svg></div>
<div class="gd" style="left:720.9px">Miesięczny</div>
<div class="gh" style="left:884.2px;letter-spacing:0.12px">Kwota subskrypcji</div>
<svg class="keb" style="left:994.8px" viewBox="0 0 3 14"><circle cx="1.5" cy="1.5" r="1.35" fill="#4a4a4a"/><circle cx="1.5" cy="6.8" r="1.35" fill="#4a4a4a"/><circle cx="1.5" cy="12.1" r="1.35" fill="#4a4a4a"/></svg>
<div class="fin" style="left:884.2px;width:115.3px"><i></i></div>
<div class="fbt" style="left:1002.2px"><svg width="13" height="14" viewBox="0 0 13 14"><path d="M0.2 0.3 H12.8 L7.6 6.6 V10.6 L5.6 13.8 V6.6 Z" fill="#4a50d6"/></svg></div>
<div class="gd" style="left:885.9px">12</div>
<div class="gh" style="left:1046.3px;letter-spacing:0.12px">Stawka godzinowa</div>
<svg class="keb" style="left:1160.7px" viewBox="0 0 3 14"><circle cx="1.5" cy="1.5" r="1.35" fill="#4a4a4a"/><circle cx="1.5" cy="6.8" r="1.35" fill="#4a4a4a"/><circle cx="1.5" cy="12.1" r="1.35" fill="#4a4a4a"/></svg>
<div class="fin" style="left:1046.3px;width:114.5px"><i></i></div>
<div class="fbt" style="left:1164.0px"><svg width="13" height="14" viewBox="0 0 13 14"><path d="M0.2 0.3 H12.8 L7.6 6.6 V10.6 L5.6 13.8 V6.6 Z" fill="#4a50d6"/></svg></div>
<div class="gd" style="left:1048.0px">40</div>
<div class="gh" style="left:1208.5px;letter-spacing:0.07px">Stawka godzinowa za nadgodziny</div>
<svg class="keb" style="left:1403.8px" viewBox="0 0 3 14"><circle cx="1.5" cy="1.5" r="1.35" fill="#4a4a4a"/><circle cx="1.5" cy="6.8" r="1.35" fill="#4a4a4a"/><circle cx="1.5" cy="12.1" r="1.35" fill="#4a4a4a"/></svg>
<div class="fin" style="left:1208.5px;width:196.2px"><i></i></div>
<div class="fbt" style="left:1407.9px"><svg width="13" height="14" viewBox="0 0 13 14"><path d="M0.2 0.3 H12.8 L7.6 6.6 V10.6 L5.6 13.8 V6.6 Z" fill="#4a50d6"/></svg></div>
<div class="gd" style="left:1210.2px">50</div>
<div class="gh" style="left:1452.8px;letter-spacing:0.04px">Limit godzin</div>
<svg class="keb" style="left:1529.7px" viewBox="0 0 3 14"><circle cx="1.5" cy="1.5" r="1.35" fill="#4a4a4a"/><circle cx="1.5" cy="6.8" r="1.35" fill="#4a4a4a"/><circle cx="1.5" cy="12.1" r="1.35" fill="#4a4a4a"/></svg>
<div class="fin" style="left:1452.8px;width:115px"><i></i></div>
<div class="fbt" style="left:1571.0px"><svg width="13" height="14" viewBox="0 0 13 14"><path d="M0.2 0.3 H12.8 L7.6 6.6 V10.6 L5.6 13.8 V6.6 Z" fill="#4a50d6"/></svg></div>
<div class="gd" style="left:1454.5px">12</div>
<div class="gh" style="left:1615.3px;letter-spacing:0.06px">Limit godzin subskrypcji</div>
<svg class="keb" style="left:1757.1px" viewBox="0 0 3 14"><circle cx="1.5" cy="1.5" r="1.35" fill="#4a4a4a"/><circle cx="1.5" cy="6.8" r="1.35" fill="#4a4a4a"/><circle cx="1.5" cy="12.1" r="1.35" fill="#4a4a4a"/></svg>
<div class="fin" style="left:1615.3px;width:138.7px"><i></i></div>
<div class="fbt" style="left:1757.2px"><svg width="13" height="14" viewBox="0 0 13 14"><path d="M0.2 0.3 H12.8 L7.6 6.6 V10.6 L5.6 13.8 V6.6 Z" fill="#4a50d6"/></svg></div>
<div class="gd" style="left:1617.0px">20</div>

<!-- export icons -->
<svg class="abs" style="left:1801px;top:505px" width="16" height="20" viewBox="0 0 16 20"><path d="M1.6 0 H8.9 V4.4 Q8.9 5.7 10.2 5.7 H15.3 V17.7 Q15.3 19.1 13.9 19.1 H1.6 Q0.2 19.1 0.2 17.7 V1.4 Q0.2 0 1.6 0 Z" fill="#469d70"/><path d="M10.3 0 L14.7 4.3 H10.3 Z" fill="#469d70"/><path d="M5.1 9.2 L10.2 16.5 M10.2 9.2 L5.1 16.5" stroke="#fff" stroke-width="2.3"/></svg>
<svg class="abs" style="left:1823.4px;top:505px" width="16" height="20" viewBox="0 0 16 20"><path d="M1.6 0 H8.9 V4.4 Q8.9 5.7 10.2 5.7 H15.3 V17.7 Q15.3 19.1 13.9 19.1 H1.6 Q0.2 19.1 0.2 17.7 V1.4 Q0.2 0 1.6 0 Z" fill="#e45c6a"/><path d="M10.3 0 L14.7 4.3 H10.3 Z" fill="#e45c6a"/><text x="1.6" y="13.95" font-family="Liberation Sans, sans-serif" font-weight="bold" font-size="7.7" fill="#fff" textLength="12.2" lengthAdjust="spacingAndGlyphs">PDF</text></svg>

<!-- pager -->
<svg class="abs" style="left:357px;top:626.5px" width="9" height="9" viewBox="0 0 9 9"><path d="M0.9 0.3 V8.7" stroke="#606060" stroke-width="1.3"/><path d="M8.6 0.4 L3 4.5 L8.6 8.6 Z" fill="#606060"/></svg>
<svg class="abs" style="left:389px;top:626.5px" width="8" height="9" viewBox="0 0 8 9"><path d="M7.4 0.4 L1 4.5 L7.4 8.6 Z" fill="#606060"/></svg>
<div class="pgnum" style="left:408px;top:616px">1</div>
<svg class="abs" style="left:451.5px;top:626.5px" width="8" height="9" viewBox="0 0 8 9"><path d="M0.6 0.4 L7 4.5 L0.6 8.6 Z" fill="#606060"/></svg>
<svg class="abs" style="left:480px;top:626.5px" width="9" height="9" viewBox="0 0 9 9"><path d="M8.1 0.3 V8.7" stroke="#606060" stroke-width="1.3"/><path d="M0.4 0.4 L6 4.5 L0.4 8.6 Z" fill="#606060"/></svg>
<div class="pgt" style="left:513.7px;top:625px">Strona</div>
<div class="sel" style="left:559px;top:616px;width:64.5px"><b style="left:11.5px">1</b></div>
<div class="pgt" style="left:631.3px;top:625px">z 1</div>
<div class="sel" style="left:661px;top:616px;width:64.5px"><b>20</b><i></i></div>
<div class="pgt" style="left:733px;top:625px;letter-spacing:0.08px">na stronę</div>
<div class="pgt" style="left:1638px;top:625px;letter-spacing:0.05px">Wyświetlanie elementów 1 - 1 z 1</div>
<svg class="abs" style="left:1851.5px;top:622.5px" width="17" height="17" viewBox="0 0 17 17"><path d="M8.6 3.5 A5.9 5.9 0 1 0 14.15 7.4" fill="none" stroke="#1f2226" stroke-width="2"/><path d="M8 0.2 L12.4 3.5 L8 6.8 Z" fill="#1f2226"/></svg>


</body>
</html>
